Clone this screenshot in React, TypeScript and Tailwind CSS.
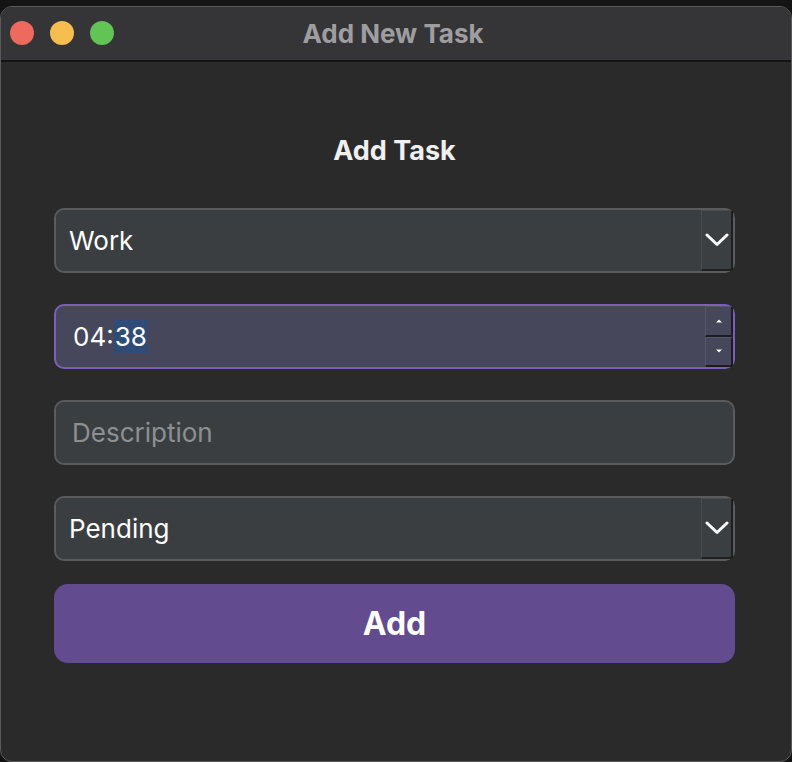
import React from 'react';

// 下向きシェブロン（ネイティブselect風）
const Chevron = () => (
  <svg width="24" height="14" viewBox="0 0 24 14" fill="none">
    <path d="M2 2 L12 11.5 L22 2" stroke="#ffffff" strokeWidth="3" strokeLinecap="round" strokeLinejoin="round" />
  </svg>
);

const SelectField = ({ value }: { value: string }) => (
  <div className="flex h-[65px] w-full items-stretch rounded-[10px] border-2 border-[#595b5d] bg-[#3b3e41]">
    <div className="flex flex-1 items-center pl-[13px] text-[26px] text-white">{value}</div>
    <div className="flex w-[32px] items-center justify-center border-l border-t border-[#4a4d50] border-r-2 border-b-2 border-r-[#1e1f20] border-b-[#1e1f20] bg-[#3c3f42]">
      <Chevron />
    </div>
  </div>
);

export default function App() {
  return (
    <div className="h-[762px] w-[792px] bg-[#141414] pt-[6px] font-['Inter','Liberation_Sans',sans-serif]">
      <div className="flex h-full flex-col overflow-hidden rounded-[12px] border border-[#5a5a5a] bg-[#2a2a2a]">
        {/* タイトルバー */}
        <div className="relative flex h-[55px] shrink-0 items-center justify-center border-b-2 border-[#141414] bg-[#353537] pr-[6px]">
          <div className="absolute left-[9px] top-[14px] flex gap-[16px]">
            <span className="h-[24px] w-[24px] rounded-full bg-[#ee6a5f]" />
            <span className="h-[24px] w-[24px] rounded-full bg-[#f5be4f]" />
            <span className="h-[24px] w-[24px] rounded-full bg-[#61c454]" />
          </div>
          <span className="text-[26px] font-bold text-[#9e9ea0]">Add New Task</span>
        </div>

        {/* フォーム */}
        <div className="ml-[53px] flex w-[681px] flex-col pt-[74px]">
          <h1 className="text-center text-[27px] font-bold leading-[30px] text-[#f0f0f0]">Add Task</h1>

          <div className="mt-[42px] flex flex-col gap-[31px]">
            <SelectField value="Work" />

            {/* 時刻入力 */}
            <div className="flex h-[65px] w-full items-stretch rounded-[10px] border-2 border-[#7b5fbd] bg-[#46475a]">
              <div className="flex flex-1 items-center pl-[17px] text-[26px] text-white">
                <span>04:</span>
                <span className="bg-[#2f4b78] px-[1px] leading-[33px]">38</span>
              </div>
              <div className="flex w-[28px] flex-col">
                <div className="flex flex-1 items-center justify-center border-l border-t border-[#55566a] border-r-2 border-b-2 border-r-[#1c1c22] border-b-[#1c1c22] bg-[#46475a]">
                  <svg width="6" height="4" viewBox="0 0 6 4">
                    <path d="M3 0.5 L6 3.5 L0 3.5 Z" fill="#ffffff" />
                  </svg>
                </div>
                <div className="flex flex-1 items-center justify-center border-l border-t border-[#55566a] border-r-2 border-b-2 border-r-[#1c1c22] border-b-[#1c1c22] bg-[#46475a]">
                  <svg width="6" height="4" viewBox="0 0 6 4">
                    <path d="M0 0.5 L6 0.5 L3 3.5 Z" fill="#ffffff" />
                  </svg>
                </div>
              </div>
            </div>

            <div className="flex h-[65px] w-full items-center rounded-[10px] border-2 border-[#595b5d] bg-[#3b3e41] pl-[16px] text-[26px] text-[#8d8f91]">
              Description
            </div>

            <SelectField value="Pending" />
          </div>

          <button className="mt-[23px] h-[79px] w-full rounded-[14px] bg-[#624b8f] text-[32px] font-bold text-white">
            Add
          </button>
        </div>
      </div>
    </div>
  );
}
